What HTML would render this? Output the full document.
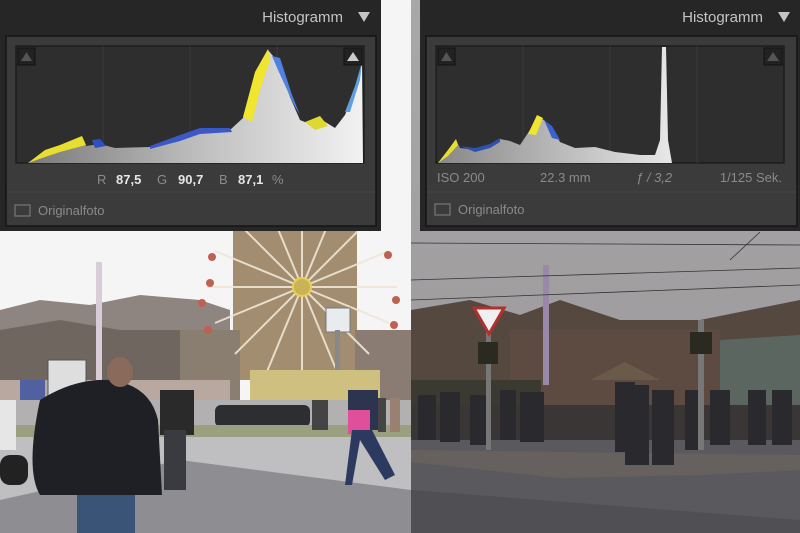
<!DOCTYPE html>
<html><head><meta charset="utf-8"><style>
html,body{margin:0;padding:0;width:800px;height:533px;overflow:hidden;background:#fff}
svg{display:block}
text{font-family:"Liberation Sans","DejaVu Sans",sans-serif}
</style></head><body>
<svg width="800" height="533" viewBox="0 0 800 533" xmlns="http://www.w3.org/2000/svg">
<defs>
<linearGradient id="hg" x1="0" x2="1" y1="0" y2="0"><stop offset="0" stop-color="#7a7a7a"/><stop offset="0.5" stop-color="#bdbdbd"/><stop offset="1" stop-color="#f2f2f2"/></linearGradient>
<linearGradient id="hg2" x1="0" x2="1" y1="0" y2="0"><stop offset="0" stop-color="#888"/><stop offset="1" stop-color="#e8e8e8"/></linearGradient>
<linearGradient id="sky2" x1="0" x2="0" y1="0" y2="1"><stop offset="0" stop-color="#a9a7a9"/><stop offset="1" stop-color="#9a9799"/></linearGradient>
</defs>
<!-- LEFT PHOTO -->
<rect x="0" y="0" width="411" height="533" fill="#f5f5f6"/>
<path d="M0 310 L40 300 L90 305 L140 295 L200 300 L230 310 L230 420 L0 420Z" fill="#8e8580"/>
<path d="M0 330 L60 320 L120 330 L180 330 L230 340 L230 420 L0 420Z" fill="#6f6660"/>
<rect x="233" y="230" width="124" height="150" fill="#a28d70"/>
<rect x="180" y="330" width="60" height="70" fill="#8a7e70"/>
<rect x="355" y="330" width="56" height="70" fill="#8a7c72"/>
<g stroke="#efe6d4" stroke-width="2" opacity="0.9">
<line x1="302" y1="287" x2="302" y2="192"/><line x1="302" y1="287" x2="302" y2="382"/>
<line x1="302" y1="287" x2="207" y2="287"/><line x1="302" y1="287" x2="397" y2="287"/>
<line x1="302" y1="287" x2="235" y2="220"/><line x1="302" y1="287" x2="369" y2="354"/>
<line x1="302" y1="287" x2="369" y2="220"/><line x1="302" y1="287" x2="235" y2="354"/>
<line x1="302" y1="287" x2="266" y2="200"/><line x1="302" y1="287" x2="338" y2="374"/>
<line x1="302" y1="287" x2="338" y2="200"/><line x1="302" y1="287" x2="266" y2="374"/>
<line x1="302" y1="287" x2="215" y2="251"/><line x1="302" y1="287" x2="389" y2="323"/>
<line x1="302" y1="287" x2="389" y2="251"/><line x1="302" y1="287" x2="215" y2="323"/>
</g>
<circle cx="302" cy="287" r="9" fill="#c9b35a" stroke="#e8d050" stroke-width="2"/>
<g fill="#c06050"><circle cx="212" cy="257" r="4"/><circle cx="202" cy="303" r="4"/><circle cx="208" cy="330" r="4"/><circle cx="388" cy="255" r="4"/><circle cx="396" cy="300" r="4"/><circle cx="394" cy="325" r="4"/><circle cx="210" cy="283" r="4"/></g>
<rect x="326" y="308" width="24" height="24" fill="#e8ecef" stroke="#777"/>
<rect x="335" y="330" width="5" height="100" fill="#888"/>
<rect x="96" y="262" width="6" height="140" fill="#d8ccd8"/>
<rect x="250" y="370" width="130" height="30" fill="#d0c080"/>
<rect x="0" y="380" width="230" height="40" fill="#b8a8a0"/>
<rect x="20" y="380" width="25" height="20" fill="#5060a0"/>
<rect x="48" y="360" width="38" height="45" fill="#dedede" stroke="#555"/>
<rect x="0" y="400" width="411" height="33" fill="#b2b0b0"/>
<rect x="215" y="405" width="95" height="22" rx="6" fill="#2c2e32"/>
<rect x="0" y="425" width="411" height="12" fill="#9aa080"/>
<rect x="0" y="437" width="411" height="96" fill="#bfbfc1"/>
<path d="M180 460 L411 490 L411 533 L0 533 L0 500 Z" fill="#8e8e92"/>
<rect x="0" y="400" width="16" height="50" fill="#e6e6e6"/>
<!-- people left -->
<path d="M40 400 Q75 378 110 380 Q150 385 158 420 L162 495 L40 495 Q25 470 40 400Z" fill="#1e2026"/>
<ellipse cx="120" cy="372" rx="13" ry="15" fill="#8a6a5a"/>
<rect x="77" y="495" width="58" height="38" fill="#3a5478"/>
<rect x="0" y="455" width="28" height="30" rx="10" fill="#222"/>
<rect x="160" y="390" width="34" height="45" fill="#2a2a2a"/><rect x="164" y="430" width="22" height="60" fill="#3a3b40"/>
<rect x="348" y="390" width="30" height="40" fill="#2c3450"/><rect x="348" y="410" width="22" height="24" fill="#e0509a"/>
<path d="M352 430 L345 485 L352 485 L360 440 L385 480 L395 475 L372 430Z" fill="#2c3a60"/>
<g fill="#444"><rect x="312" y="400" width="8" height="30"/><rect x="320" y="400" width="8" height="30"/><rect x="378" y="398" width="8" height="34"/><rect x="390" y="398" width="10" height="34" fill="#9a8070"/></g>
<!-- RIGHT PHOTO -->
<rect x="411" y="0" width="389" height="533" fill="url(#sky2)"/>
<path d="M411 310 L470 300 L520 315 L560 300 L620 320 L700 320 L800 300 L800 450 L411 450Z" fill="#55483f"/>
<path d="M510 330 L720 330 L720 440 L510 440Z" fill="#5d4a40"/>
<path d="M720 340 L800 335 L800 440 L720 440Z" fill="#5c6660"/>
<path d="M590 380 L625 362 L660 380Z" fill="#6a5a4a"/>
<rect x="411" y="380" width="130" height="30" fill="#3a3a30"/>
<rect x="411" y="405" width="389" height="45" fill="#3a3636"/>
<rect x="411" y="440" width="389" height="93" fill="#5a5a5e"/>
<path d="M411 450 L800 455 L800 470 L700 475 L560 478 L411 462Z" fill="#66605e"/>
<path d="M411 490 L800 520 L800 533 L411 533Z" fill="#4f4f54"/>
<g fill="#2a2a2e">
<rect x="418" y="395" width="18" height="45"/><rect x="440" y="392" width="20" height="50"/><rect x="470" y="395" width="18" height="50"/><rect x="500" y="390" width="16" height="50"/><rect x="520" y="392" width="24" height="50"/>
<rect x="615" y="382" width="20" height="70"/><rect x="625" y="385" width="24" height="80"/><rect x="652" y="390" width="22" height="75"/><rect x="685" y="390" width="18" height="60"/><rect x="710" y="390" width="20" height="55"/><rect x="748" y="390" width="18" height="55"/><rect x="772" y="390" width="20" height="55"/>
</g>
<rect x="543" y="265" width="6" height="120" fill="#9a88aa"/>
<rect x="486" y="330" width="5" height="120" fill="#777"/>
<rect x="698" y="320" width="6" height="130" fill="#777"/>
<rect x="478" y="342" width="20" height="22" fill="#2a2a20"/>
<rect x="690" y="332" width="22" height="22" fill="#2a2a20"/>
<path d="M474 308 L504 308 L489 334Z" fill="#f0f0f0" stroke="#b03030" stroke-width="3"/>
<g stroke="#333" stroke-width="0.8" fill="none"><path d="M411 243 L800 245"/><path d="M411 280 L800 268"/><path d="M411 300 L800 285"/><path d="M730 260 L760 232"/></g>
<!-- LEFT PANEL -->
<rect x="0" y="0" width="381" height="231" fill="#262626"/>
<rect x="6" y="36" width="370" height="190" fill="#3b3b3b" stroke="#151515" stroke-width="1.5"/>
<rect x="16" y="46" width="348" height="117" fill="#2e2e2e" stroke="#111" stroke-width="1"/>
<g stroke="#3a3a3a" stroke-width="1"><line x1="103" y1="46" x2="103" y2="163"/><line x1="190" y1="46" x2="190" y2="163"/><line x1="277" y1="46" x2="277" y2="163"/></g>
<path d="M28 163 L45 152 L60 148 L82 140 L86 146 L100 144 L115 148 L150 147 L180 138 L200 131 L230 130 L243 118 L255 75 L268 50 L278 62 L290 97 L300 120 L312 125 L322 120 L335 128 L345 115 L355 90 L362 64 L363 163Z" fill="url(#hg)"/>
<path d="M28 163 L45 150 L60 145 L82 136 L86 145 L60 152 L45 157Z" fill="#e8de30"/>
<path d="M92 140 L100 139 L106 146 L95 148Z" fill="#3050c0"/>
<path d="M150 146 L180 135 L200 128 L230 128 L232 132 L200 134 L180 141 L150 149Z" fill="#3c58c8"/>
<path d="M243 117 L255 72 L268 49 L270 60 L260 90 L252 122Z" fill="#f0e630"/>
<path d="M272 56 L280 58 L292 95 L300 115 L294 105 L278 70Z" fill="#5080e0"/>
<path d="M305 122 L320 116 L328 126 L315 130Z" fill="#e0d830"/>
<path d="M345 112 L355 86 L362 62 L360 80 L350 112Z" fill="#60a0e0"/>
<path d="M18 48 h17 v17 h-17Z" fill="#222" stroke="#111"/><path d="M21 61 L26.5 52 L32 61Z" fill="#555"/>
<path d="M344 48 h18 v17 h-18Z" fill="#222" stroke="#111"/><path d="M347 61 L353 52 L359 61Z" fill="#ccc"/>
<text x="343" y="22" text-anchor="end" font-size="15" fill="#c4c4c4">Histogramm</text>
<path d="M358 12 L370 12 L364 22Z" fill="#c4c4c4"/>
<text x="97" y="184" font-size="13" fill="#8a8a8a">R</text><text x="116" y="184" font-size="13" fill="#e6e6e6" font-weight="bold">87,5</text>
<text x="157" y="184" font-size="13" fill="#8a8a8a">G</text><text x="178" y="184" font-size="13" fill="#e6e6e6" font-weight="bold">90,7</text>
<text x="219" y="184" font-size="13" fill="#8a8a8a">B</text><text x="238" y="184" font-size="13" fill="#e6e6e6" font-weight="bold">87,1</text>
<text x="272" y="184" font-size="13" fill="#8a8a8a">%</text>
<line x1="7" y1="192" x2="375" y2="192" stroke="#444" stroke-width="1"/>
<rect x="15" y="205" width="15" height="11" fill="none" stroke="#777" stroke-width="1.2"/>
<text x="38" y="215" font-size="13" fill="#8a8a8a">Originalfoto</text>
<!-- RIGHT PANEL -->
<rect x="420" y="0" width="380" height="231" fill="#262626"/>
<rect x="426" y="36" width="371" height="190" fill="#3b3b3b" stroke="#151515" stroke-width="1.5"/>
<rect x="436" y="46" width="348" height="117" fill="#2e2e2e" stroke="#111" stroke-width="1"/>
<g stroke="#3a3a3a" stroke-width="1"><line x1="523" y1="46" x2="523" y2="163"/><line x1="610" y1="46" x2="610" y2="163"/><line x1="697" y1="46" x2="697" y2="163"/></g>
<path d="M438 163 L448 150 L456 140 L460 148 L475 150 L490 146 L500 139 L510 141 L520 145 L530 130 L537 117 L544 120 L552 128 L560 142 L575 148 L595 147 L615 152 L640 155 L655 155 L660 140 L662 47 L666 47 L668 140 L672 163Z" fill="url(#hg2)"/>
<path d="M438 163 L448 150 L456 139 L458 145 L448 156Z" fill="#e8de30"/>
<path d="M528 134 L537 115 L543 118 L536 135Z" fill="#f0e630"/>
<path d="M544 120 L552 126 L560 140 L552 138Z" fill="#3c60d0"/>
<path d="M460 146 L475 148 L490 144 L500 138 L500 142 L490 148 L475 152Z" fill="#3050b0"/>
<path d="M438 48 h17 v17 h-17Z" fill="#222" stroke="#111"/><path d="M441 61 L446.5 52 L452 61Z" fill="#555"/>
<path d="M764 48 h18 v17 h-18Z" fill="#222" stroke="#111"/><path d="M767 61 L773 52 L779 61Z" fill="#555"/>
<text x="763" y="22" text-anchor="end" font-size="15" fill="#c4c4c4">Histogramm</text>
<path d="M778 12 L790 12 L784 22Z" fill="#c4c4c4"/>
<text x="437" y="182" font-size="13" fill="#8a8a8a">ISO 200</text>
<text x="540" y="182" font-size="13" fill="#8a8a8a">22.3 mm</text>
<text x="636" y="182" font-size="13" fill="#8a8a8a" font-style="italic">ƒ / 3,2</text>
<text x="782" y="182" text-anchor="end" font-size="13" fill="#8a8a8a">1/125 Sek.</text>
<line x1="427" y1="192" x2="796" y2="192" stroke="#444" stroke-width="1"/>
<rect x="435" y="204" width="15" height="11" fill="none" stroke="#777" stroke-width="1.2"/>
<text x="458" y="214" font-size="13" fill="#8a8a8a">Originalfoto</text>
</svg>
</body></html>
